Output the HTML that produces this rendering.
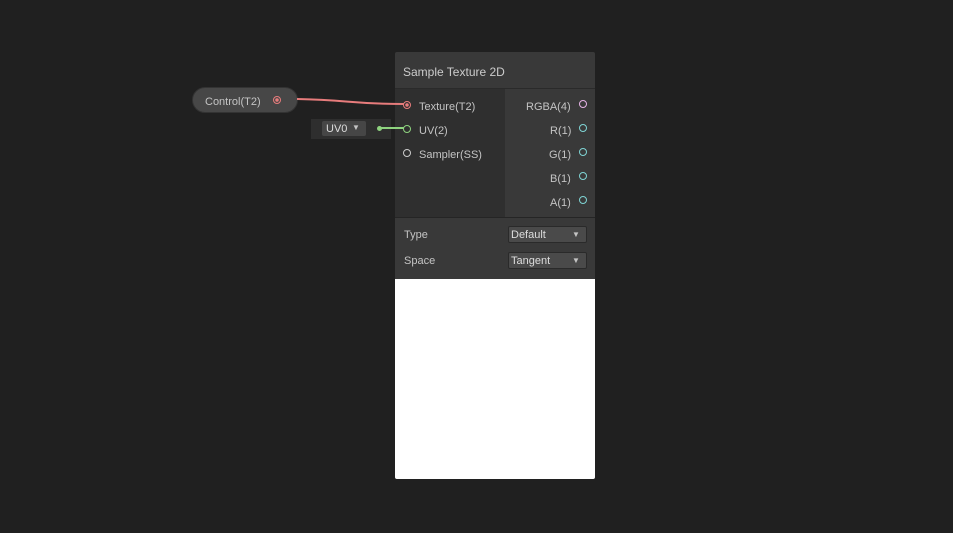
<!DOCTYPE html><html><head><style>
body{margin:0;width:953px;height:533px;background:#202020;position:relative;overflow:hidden;font-family:"Liberation Sans",sans-serif;font-size:11px;color:#c4c4c4}
div{position:absolute;box-sizing:border-box}
.p{width:8px;height:8px;border-radius:50%;border:1px solid}
.t{white-space:nowrap}
</style></head><body>
<div style="left:192px;top:87px;width:106px;height:26px;border-radius:13px;background:#474747;border:1px solid #333"></div>
<div class="t" style="left:205px;top:96px">Control(T2)</div>
<div class="p" style="left:273px;top:96px;border-color:#e77c7c;background:radial-gradient(#e77c7c 40%,transparent 45%)"></div>
<div style="left:311px;top:119px;width:80px;height:20px;background:#2e2e2e"></div>
<div style="left:322px;top:121px;width:44px;height:15px;background:#464646;border-radius:2px"></div>
<div class="t" style="left:326px;top:123px;color:#ddd">UV0</div><div class="t" style="left:352px;top:123px;font-size:8px">▼</div>
<div style="left:377px;top:126px;width:5px;height:5px;border-radius:50%;background:#8ed37f"></div>
<div style="left:395px;top:52px;width:200px;height:427px;background:#393939;border-radius:2px;overflow:hidden">
 <div style="left:0;top:36px;width:110px;height:130px;background:#2f2f2f"></div>
 <div style="left:0;top:165px;width:200px;height:1px;background:#252525"></div>
 <div style="left:0;top:36px;width:200px;height:1px;background:#2a2a2a"></div>
 <div style="left:0;top:227px;width:200px;height:200px;background:#fff"></div>
</div>
<svg style="position:absolute;left:0;top:0" width="953" height="533">
<path d="M297 99 C350 100 350 104 404 104" stroke="#e77c7c" stroke-width="2" fill="none"/>
<path d="M380 128 L404 128" stroke="#8ed37f" stroke-width="2" fill="none"/>
</svg>
<div class="t" style="left:403px;top:65px;font-size:12px;color:#ccc">Sample Texture 2D</div>
<div class="p" style="left:403px;top:101px;border-color:#e77c7c;background:radial-gradient(#e77c7c 40%,transparent 45%)"></div>
<div class="t" style="left:419px;top:101px">Texture(T2)</div>
<div class="p" style="left:403px;top:125px;border-color:#8ed37f;background:#2f2f2f"></div>
<div class="t" style="left:419px;top:125px">UV(2)</div>
<div class="p" style="left:403px;top:149px;border-color:#ccc"></div>
<div class="t" style="left:419px;top:149px">Sampler(SS)</div>
<div class="t" style="left:526px;top:101px">RGBA(4)</div>
<div class="p" style="left:579px;top:100px;border-color:#e6b3e6"></div>
<div class="t" style="left:550px;top:125px">R(1)</div><div class="p" style="left:579px;top:124px;border-color:#7fd4d4"></div>
<div class="t" style="left:549px;top:149px">G(1)</div><div class="p" style="left:579px;top:148px;border-color:#7fd4d4"></div>
<div class="t" style="left:550px;top:173px">B(1)</div><div class="p" style="left:579px;top:172px;border-color:#7fd4d4"></div>
<div class="t" style="left:550px;top:197px">A(1)</div><div class="p" style="left:579px;top:196px;border-color:#7fd4d4"></div>
<div class="t" style="left:404px;top:229px">Type</div>
<div style="left:508px;top:226px;width:79px;height:17px;background:#4a4a4a;border-radius:2px;border:1px solid #2a2a2a"></div>
<div class="t" style="left:511px;top:229px;color:#ddd">Default</div><div class="t" style="left:572px;top:230px;font-size:8px">▼</div>
<div class="t" style="left:404px;top:255px">Space</div>
<div style="left:508px;top:252px;width:79px;height:17px;background:#4a4a4a;border-radius:2px;border:1px solid #2a2a2a"></div>
<div class="t" style="left:511px;top:255px;color:#ddd">Tangent</div><div class="t" style="left:572px;top:256px;font-size:8px">▼</div>
</body></html>
